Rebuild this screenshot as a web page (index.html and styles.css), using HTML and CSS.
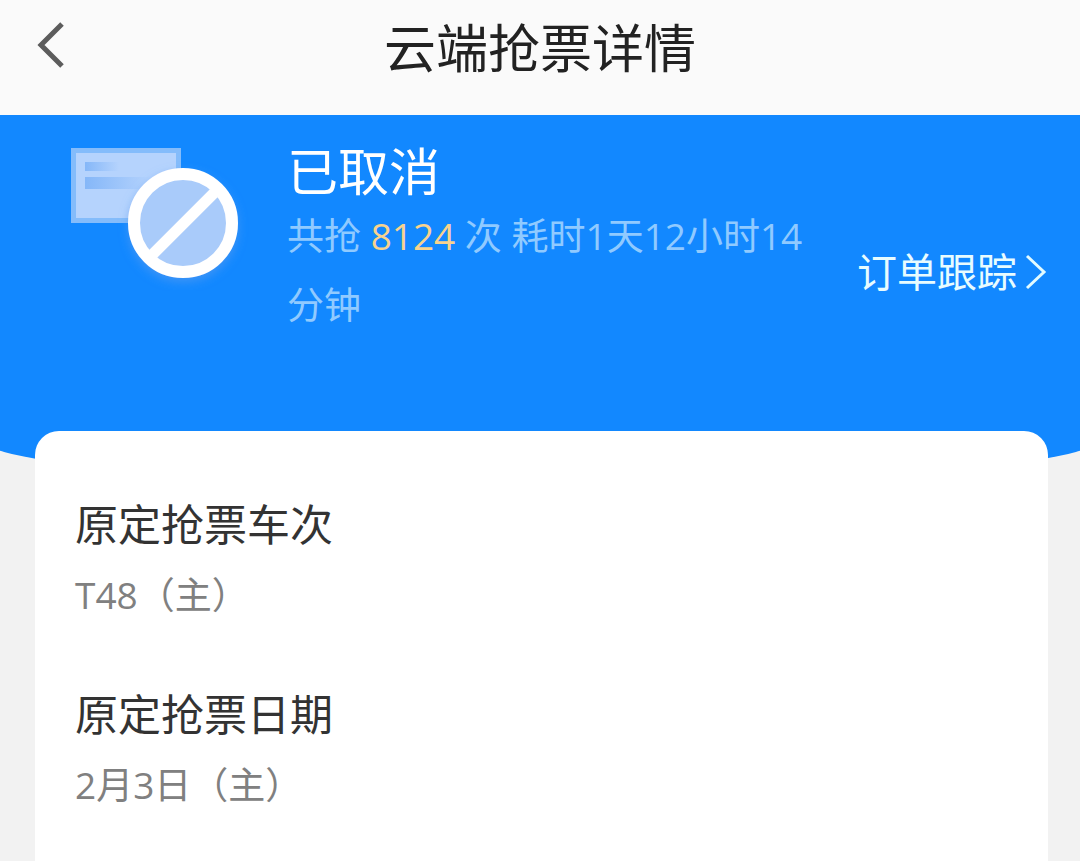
FILE: index.html
```
<!DOCTYPE html>
<html lang="zh-CN">
	<head>
		<meta charset="utf-8">
		<meta name="viewport" content="width=device-width, initial-scale=1">
		<title>云端抢票详情</title>
		<link rel="stylesheet" href="styles.css">
	</head>
	<body>
		<header class="navbar">
			<button class="back" type="button" aria-label="返回">
				<svg width="30" height="48" viewBox="0 0 30 48" fill="none" stroke="#5c5c5c" stroke-width="5">
					<path d="M26 3L5 24L26 45"/>
				</svg>
			</button>
			<h1>云端抢票详情</h1>
		</header>

		<main>
			<section class="hero">
				<svg class="hero-icon" width="180" height="150" viewBox="0 0 180 150">
					<defs>
						<linearGradient id="line" x1="0" x2="1" y1="0" y2="0">
							<stop offset="0" stop-color="#85b7f8"/>
							<stop offset="1" stop-color="#b5d3fd"/>
						</linearGradient>
						<filter id="shadow" x="-20%" y="-20%" width="140%" height="150%">
							<feDropShadow dx="0" dy="4" stdDeviation="5" flood-color="#5c9cf0" flood-opacity="0.6"/>
						</filter>
					</defs>
					<rect x="1" y="7" width="110" height="75" fill="#84bcfb"/>
					<rect x="6" y="12" width="100" height="65" fill="#b5d3fd"/>
					<rect x="15" y="21" width="34" height="9" fill="url(#line)"/>
					<rect x="15" y="36" width="66" height="12" fill="url(#line)"/>
					<g filter="url(#shadow)">
						<circle cx="113" cy="82" r="49" fill="#a9cbfa" stroke="#fff" stroke-width="12"/>
						<path d="M81 115L146 50" stroke="#fff" stroke-width="11"/>
					</g>
				</svg>
				<div class="status">
					<h2>已取消</h2>
					<p>共抢 <span class="count">8124</span> 次 耗时1天12小时14分钟</p>
				</div>
				<a class="track" href="#">订单跟踪
					<svg width="22" height="36" viewBox="0 0 22 36" fill="none" stroke="#e2fbff" stroke-width="3">
						<path d="M2 2L19 18L2 34"/>
					</svg>
				</a>
			</section>

			<section class="card">
				<div class="item">
					<h3>原定抢票车次</h3>
					<p>T48（主）</p>
				</div>
				<div class="item">
					<h3>原定抢票日期</h3>
					<p>2月3日（主）</p>
				</div>
			</section>
		</main>
	</body>
</html>
```

FILE: styles.css
```
* {
	box-sizing: border-box;
}

body {
	margin: 0;
	min-height: 100vh;
	display: flex;
	flex-direction: column;
	background-color: #f2f2f2;
	font-family: "Open Sans", "Noto Sans CJK SC", sans-serif;
}

h1, h2, h3, p {
	margin: 0;
	font-weight: 400;
}

.navbar {
	display: grid;
	grid-template-columns: 100px 1fr 100px;
	align-items: center;
	padding: 8px 0 27px;
	background-color: #fafafa;
}

.navbar h1 {
	font-size: 52px;
	line-height: 80px;
	text-align: center;
	color: #222;
}

.back {
	display: flex;
	padding: 0 0 6px 36px;
	border: 0;
	background: none;
}

main {
	position: relative;
	flex: 1;
	display: flex;
	flex-direction: column;
	overflow: hidden;
}

/* blue backdrop with the curved bottom edge */
main::before {
	content: "";
	position: absolute;
	z-index: -1;
	top: 0;
	left: -20px;
	right: -20px;
	height: 371px;
	border-radius: 0 0 50% 50% / 0 0 48px 48px;
	background-color: #1288ff;
}

.hero {
	display: flex;
	align-items: flex-start;
	padding: 26px 33px 92px 70px;
}

.hero-icon {
	flex: none;
	margin-right: 37px;
}

.status {
	flex: 1;
}

.status h2 {
	font-size: 51px;
	line-height: 60px;
	color: #fff;
}

.status p {
	font-size: 37px;
	line-height: 69px;
	color: #90caff;
}

.status .count {
	color: #f8d38e;
}

.track {
	flex: none;
	display: flex;
	align-items: center;
	gap: 8px;
	margin: 101px 0 0 24px;
	font-size: 40px;
	line-height: 60px;
	color: #e8fcff;
	text-decoration: none;
}

.card {
	flex: 1;
	margin: 0 32px 0 35px;
	padding: 64px 40px 28px;
	border-radius: 24px 24px 0 0;
	background-color: #fff;
}

.item + .item {
	margin-top: 60px;
}

.item h3 {
	margin-bottom: 10px;
	font-size: 43px;
	line-height: 60px;
	color: #333;
}

.item p {
	font-size: 37px;
	line-height: 60px;
	color: #808080;
}
```
